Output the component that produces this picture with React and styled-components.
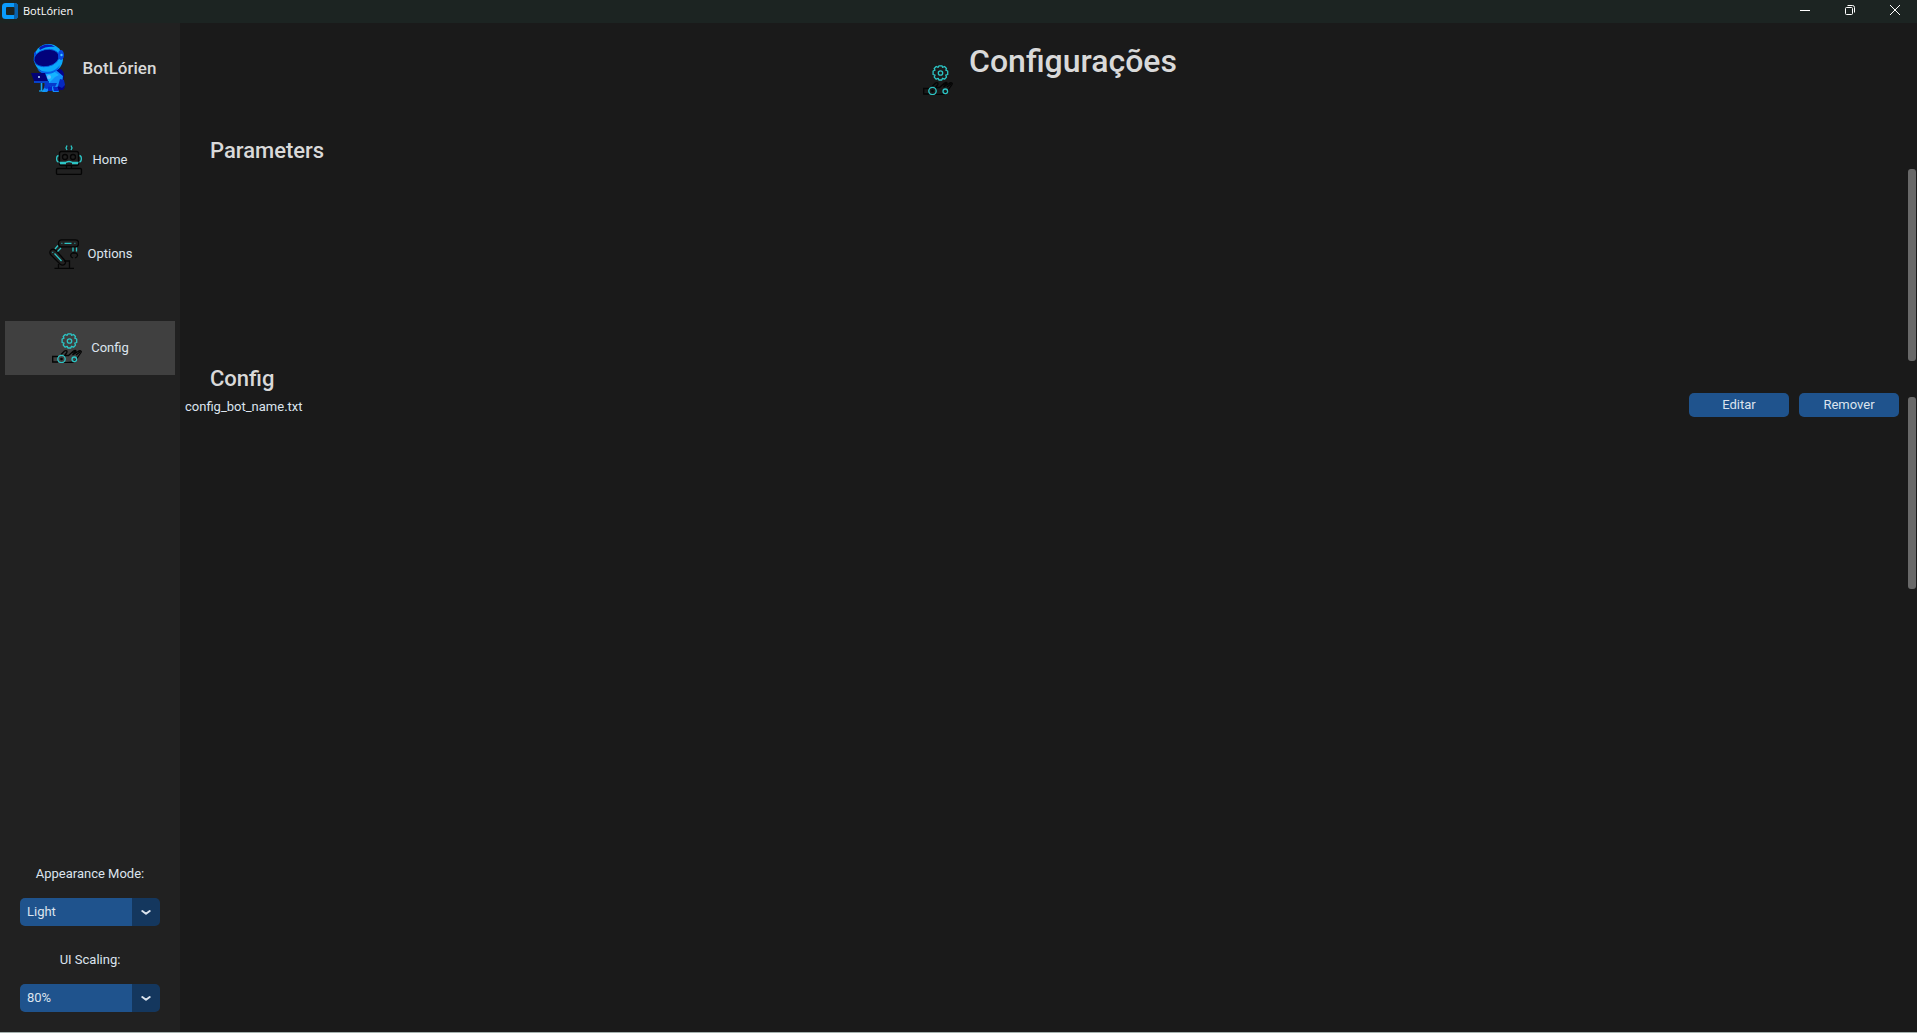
import React, { useState } from "react";
import styled, { createGlobalStyle } from "styled-components";

const color = {
  titleBar: "#1c2422",
  sidebar: "#212121",
  main: "#1a1a1a",
  active: "#404040",
  blue: "#1f538d",
  blueDark: "#14375e",
  text: "#dce4ee",
  heading: "#d9d9d9",
  thumb: "#696969",
  teal: "#2cc5c5",
};

const GlobalStyle = createGlobalStyle`
  * { box-sizing: border-box; }
  body {
    margin: 0;
    background: ${color.main};
    color: ${color.text};
    font: 13px/16px Roboto, "Liberation Sans", sans-serif;
  }
  button, select { font: inherit; color: inherit; }
  svg { display: block; flex: none; }
`;

const Window = styled.div`
  display: flex;
  flex-direction: column;
  min-height: 100vh;
  border-bottom: 1px solid #a3b0ad;
`;

const TitleBar = styled.header`
  display: flex;
  align-items: flex-start;
  justify-content: space-between;
  height: 23px;
  padding-left: 2px;
  background: ${color.titleBar};
  color: #ffffff;
`;

const AppName = styled.div`
  display: flex;
  align-items: center;
  gap: 5px;
  height: 22px;
  font: 11px/16px "Open Sans", "Noto Sans", sans-serif;
`;

const WindowControls = styled.div`
  display: flex;
`;

const WindowButton = styled.button`
  display: grid;
  place-items: center;
  width: 45px;
  height: 20px;
  padding: 0;
  border: 0;
  background: transparent;
`;

const Body = styled.div`
  display: flex;
  flex: 1;
`;

const Sidebar = styled.aside`
  display: flex;
  flex-direction: column;
  flex: none;
  width: 180px;
  padding: 20px 5px;
  background: ${color.sidebar};
`;

const Brand = styled.div`
  display: flex;
  align-items: center;
  justify-content: center;
  gap: 9px;
  height: 50px;
  margin-bottom: 40px;
  color: ${color.heading};
  font-size: 17px;
  font-weight: 500;
`;

const Nav = styled.nav`
  display: flex;
  flex-direction: column;
  gap: 40px;
`;

const NavButton = styled.button`
  display: flex;
  align-items: center;
  justify-content: center;
  gap: 9px;
  height: 54px;
  padding: 0 0 0 1px;
  border: 0;
  background: ${(p) => (p.$active ? color.active : "transparent")};
`;

const Settings = styled.div`
  display: flex;
  flex-direction: column;
  gap: 26px;
  margin-top: auto;
  padding: 0 15px;
`;

const Field = styled.div`
  display: flex;
  flex-direction: column;
  gap: 16px;
  text-align: center;
`;

const SelectBox = styled.div`
  display: grid;
  grid-template-columns: 1fr 28px;
  align-items: center;

  svg {
    grid-area: 1 / 2;
    justify-self: center;
    pointer-events: none;
    z-index: 1;
  }
`;

const Select = styled.select`
  grid-area: 1 / 1 / 2 / 3;
  appearance: none;
  height: 28px;
  padding: 0 34px 0 7px;
  border: 0;
  border-radius: 5px;
  background: linear-gradient(to left, ${color.blueDark} 28px, ${color.blue} 28px);
`;

const Main = styled.main`
  flex: 1;
  min-width: 0;
`;

const PageHeader = styled.div`
  display: flex;
  justify-content: center;
  align-items: flex-end;
  gap: 16px;
  height: 114px;
  padding: 0 0 42px 3px;
`;

const PageTitle = styled.h1`
  margin: 0 0 14px;
  color: ${color.heading};
  font-size: 32px;
  font-weight: 500;
  line-height: 40px;
`;

const SectionTitle = styled.h2`
  margin: 0;
  padding-left: 30px;
  color: ${color.heading};
  font-size: 22px;
  font-weight: 500;
  line-height: 28px;
`;

const ScrollFrame = styled.div`
  display: flex;
  height: 200px;
`;

const ScrollContent = styled.div`
  flex: 1;
`;

const ScrollThumb = styled.div`
  width: 8px;
  margin: 4px 1px 4px 9px;
  border-radius: 3px;
  background: ${color.thumb};
`;

const FileRow = styled.div`
  display: flex;
  align-items: flex-start;
  gap: 10px;
  padding-left: 5px;
`;

const FileName = styled.span`
  flex: 1;
  line-height: 28px;
`;

const ActionButton = styled.button`
  width: 100px;
  height: 24px;
  padding: 0;
  border: 0;
  border-radius: 5px;
  background: ${color.blue};
`;

const AppMark = () => (
  <svg width="16" height="16" viewBox="0 0 16 16" aria-hidden="true">
    <rect width="16" height="16" rx="3.500" fill="#0a9bfb" />
    <path d="M12 0h.5A3.500 3.500 0 0 1 16 3.500v9a3.500 3.500 0 0 1-3.500 3.500H12z" fill="#0862ae" />
    <rect x="4" y="4" width="8.500" height="8" rx="1" fill={color.titleBar} />
  </svg>
);

const Astronaut = () => (
  <svg width="50" height="50" viewBox="0 0 50 50" aria-hidden="true">
    <path d="M25 27c7-4 14-2 15 4l-1 9 2 4-2 3h-5l-8-6z" fill="#04048c" />
    <path d="M20 27l13 1 6 5-1 8-5 3 2 5h-6l-2-4-4 4h-5l3-6-1-8z" fill="#118dfa" />
    <path d="M22 31l7-3 6 4-4 2-6 6z" fill="#14b4ff" />
    <path d="M21 40h12l-2 4-4-1-4 3-3-1z" fill="#0639cc" />
    <path d="M36 36l4 1 1 5-3 3-4-2z" fill="#0629bf" />
    <path d="M24 44l4-1v5h-4zM29 44h4l2 4h-5z" fill="#0526c9" />
    <circle cx="24.500" cy="15.500" r="14.500" fill="#0ba8fa" />
    <path d="M15 5c4-4 11-5 16-1-5-1-11 0-15 3z" fill="#0419bb" />
    <path d="M13 25c7 6 17 5 23-3-2 6-7 9-13 9-5 0-8-2-10-6z" fill="#0560e8" />
    <ellipse cx="22.500" cy="15" rx="12.700" ry="8.500" transform="rotate(-12 22.500 15)" fill="#02027b" stroke="#055fe0" strokeWidth=".8" />
    <ellipse cx="37" cy="12" rx="3" ry="5" fill="#0748e0" />
    <circle cx="37.500" cy="12" r="1.200" fill="#43c6ff" />
    <path d="M10 10l2-2v4l-2 1z" fill="#0748e0" />
    <path d="M7 30h14l3 8H10z" fill="#020277" />
    <circle cx="15" cy="34" r="1" fill="#b9dcff" />
    <circle cx="25" cy="34" r="2" fill="#69b9ff" />
    <path d="M10 38h15v2H10z" fill="#0642c8" />
    <path d="M17.500 40v8" stroke="#12a5f5" strokeWidth="1.600" />
    <path d="M15 48h6" stroke="#12a5f5" strokeWidth="1.200" />
  </svg>
);

const RobotIcon = () => (
  <svg width="30" height="30" viewBox="0 0 30 30" fill="none" stroke="#050505" strokeWidth="1.300" aria-hidden="true">
    <rect x="5.500" y="6.500" width="19" height="14" rx="2" />
    <circle cx="11" cy="12" r="2.500" />
    <circle cx="19" cy="12" r="2.500" />
    <path d="M12.500 20.500v3M17.500 20.500v3" />
    <rect x="2.500" y="23.500" width="25" height="6" rx="1.200" />
    <g stroke={color.teal}>
      <path d="M13 5l-1-2 1-2.500M17 5l1-2-1-2.500" />
      <path d="M4.500 10.500c-2.500.5-2.500 6 0 6.500M25.500 10.500c2.500.5 2.500 6 0 6.500" />
      <path d="M5.500 17.500h5.500c1.500 0 1.500-1 4-1s2.500 1 4 1h5.500M6 18.700h6M18 18.700h6" />
    </g>
  </svg>
);

const ArmIcon = () => (
  <svg width="30" height="30" viewBox="0 0 30 30" fill="none" stroke="#050505" strokeWidth="1.300" aria-hidden="true">
    <rect x="9.500" y=".8" width="20" height="7" rx="3" />
    <path d="M1.500 11.500c2-2 4-1.500 6 .5l8 9c3 3-1 7-4.500 4l-9-9c-1.500-1.500-1.500-3-.5-4.500z" />
    <path d="M9.500 25v4.500M5.500 29.500H25M15 22h5.500v7.500" />
    <path d="M24.500 12.500v2M24 19c-3-1-3-4-.5-5h3c3 1 2.500 4-.5 5" />
    <g stroke={color.teal}>
      <path d="M15.500 4.400h7M12.500 4.400h.8M25.500 4.400h.8" />
      <path d="M5.500 14.500l7 7.500M3.500 13l.6.6M9 6.500L6 10M12 9l-3.500 3.500" />
      <path d="M24 8.500v4M27.500 8.500v4" />
    </g>
  </svg>
);

const GearHandIcon = () => (
  <svg width="30" height="30" viewBox="0 0 30 30" fill="none" stroke="#050505" strokeWidth="1.300" aria-hidden="true">
    <path d="M6 23.500H.7v5.500H6M9 21.500l3.500-3.500c1.500-1 3.500 0 2 2l-2 2.500h4l5-4.500c2-1.500 3 0 2 1l-3 3 5.500-3.500c2-1.500 4-.5 3 1L23 28c-2 1.700-4 1.700-11.500 1.500" />
    <path d="M20 20l4-2.500M24 22l4.500-3.500" />
    <g stroke={color.teal}>
      <circle cx="9.500" cy="26" r="3.700" />
      <circle cx="22.300" cy="26.300" r="2.300" />
      <circle cx="17.500" cy="8" r="2.200" />
      <path d="M16 .8h3l.5 1.500 2-.8 2 2-.7 1.700 1.900.8v3.500l-1.900.7.7 1.900-2 2.100-2-.9-.7 1.700h-2.900l-.7-1.700-2 .9-2-2.100.8-1.900-1.900-.7V6l1.900-.8-.8-1.700 2-2 2 .8z" strokeLinejoin="round" />
    </g>
    <circle cx="9.500" cy="26" r=".7" />
  </svg>
);

const Chevron = () => (
  <svg width="10" height="6" viewBox="0 0 10 6" fill="none" stroke={color.text} strokeWidth="2" strokeLinecap="round" strokeLinejoin="round" aria-hidden="true">
    <path d="M1.300 2L5 4.700l3.700-2.700" />
  </svg>
);

const pages = [
  { name: "Home", Icon: RobotIcon },
  { name: "Options", Icon: ArmIcon },
  { name: "Config", Icon: GearHandIcon },
];

function SelectField({ id, label, options, initial }) {
  const [value, setValue] = useState(initial);
  return (
    <Field>
      <label htmlFor={id}>{label}</label>
      <SelectBox>
        <Select id={id} value={value} onChange={(e) => setValue(e.target.value)}>
          {options.map((o) => (
            <option key={o}>{o}</option>
          ))}
        </Select>
        <Chevron />
      </SelectBox>
    </Field>
  );
}

function Section({ title, children }) {
  return (
    <section>
      <SectionTitle>{title}</SectionTitle>
      <ScrollFrame>
        <ScrollContent>{children}</ScrollContent>
        <ScrollThumb />
      </ScrollFrame>
    </section>
  );
}

export default function App() {
  const [page, setPage] = useState("Config");
  return (
    <Window>
      <GlobalStyle />
      <TitleBar>
        <AppName>
          <AppMark />
          BotLórien
        </AppName>
        <WindowControls>
          <WindowButton aria-label="Minimize">
            <svg width="10" height="10" viewBox="0 0 10 10" stroke="#fff">
              <path d="M0 5.500h10" />
            </svg>
          </WindowButton>
          <WindowButton aria-label="Restore">
            <svg width="10" height="10" viewBox="0 0 10 10" fill="none" stroke="#fff">
              <rect x=".5" y="2.500" width="7" height="7" rx="1" />
              <path d="M2.500.5h5a2 2 0 0 1 2 2v5" />
            </svg>
          </WindowButton>
          <WindowButton aria-label="Close">
            <svg width="10" height="10" viewBox="0 0 10 10" stroke="#fff">
              <path d="M0 0l10 10M10 0L0 10" />
            </svg>
          </WindowButton>
        </WindowControls>
      </TitleBar>
      <Body>
        <Sidebar>
          <Brand>
            <Astronaut />
            BotLórien
          </Brand>
          <Nav>
            {pages.map(({ name, Icon }) => (
              <NavButton key={name} $active={page === name} onClick={() => setPage(name)}>
                <Icon />
                {name}
              </NavButton>
            ))}
          </Nav>
          <Settings>
            <SelectField id="appearance" label="Appearance Mode:" options={["Light", "Dark", "System"]} initial="Light" />
            <SelectField id="scaling" label="UI Scaling:" options={["80%", "90%", "100%", "110%", "120%"]} initial="80%" />
          </Settings>
        </Sidebar>
        <Main>
          <PageHeader>
            <GearHandIcon />
            <PageTitle>Configurações</PageTitle>
          </PageHeader>
          <Section title="Parameters" />
          <Section title="Config">
            <FileRow>
              <FileName>config_bot_name.txt</FileName>
              <ActionButton>Editar</ActionButton>
              <ActionButton>Remover</ActionButton>
            </FileRow>
          </Section>
        </Main>
      </Body>
    </Window>
  );
}
